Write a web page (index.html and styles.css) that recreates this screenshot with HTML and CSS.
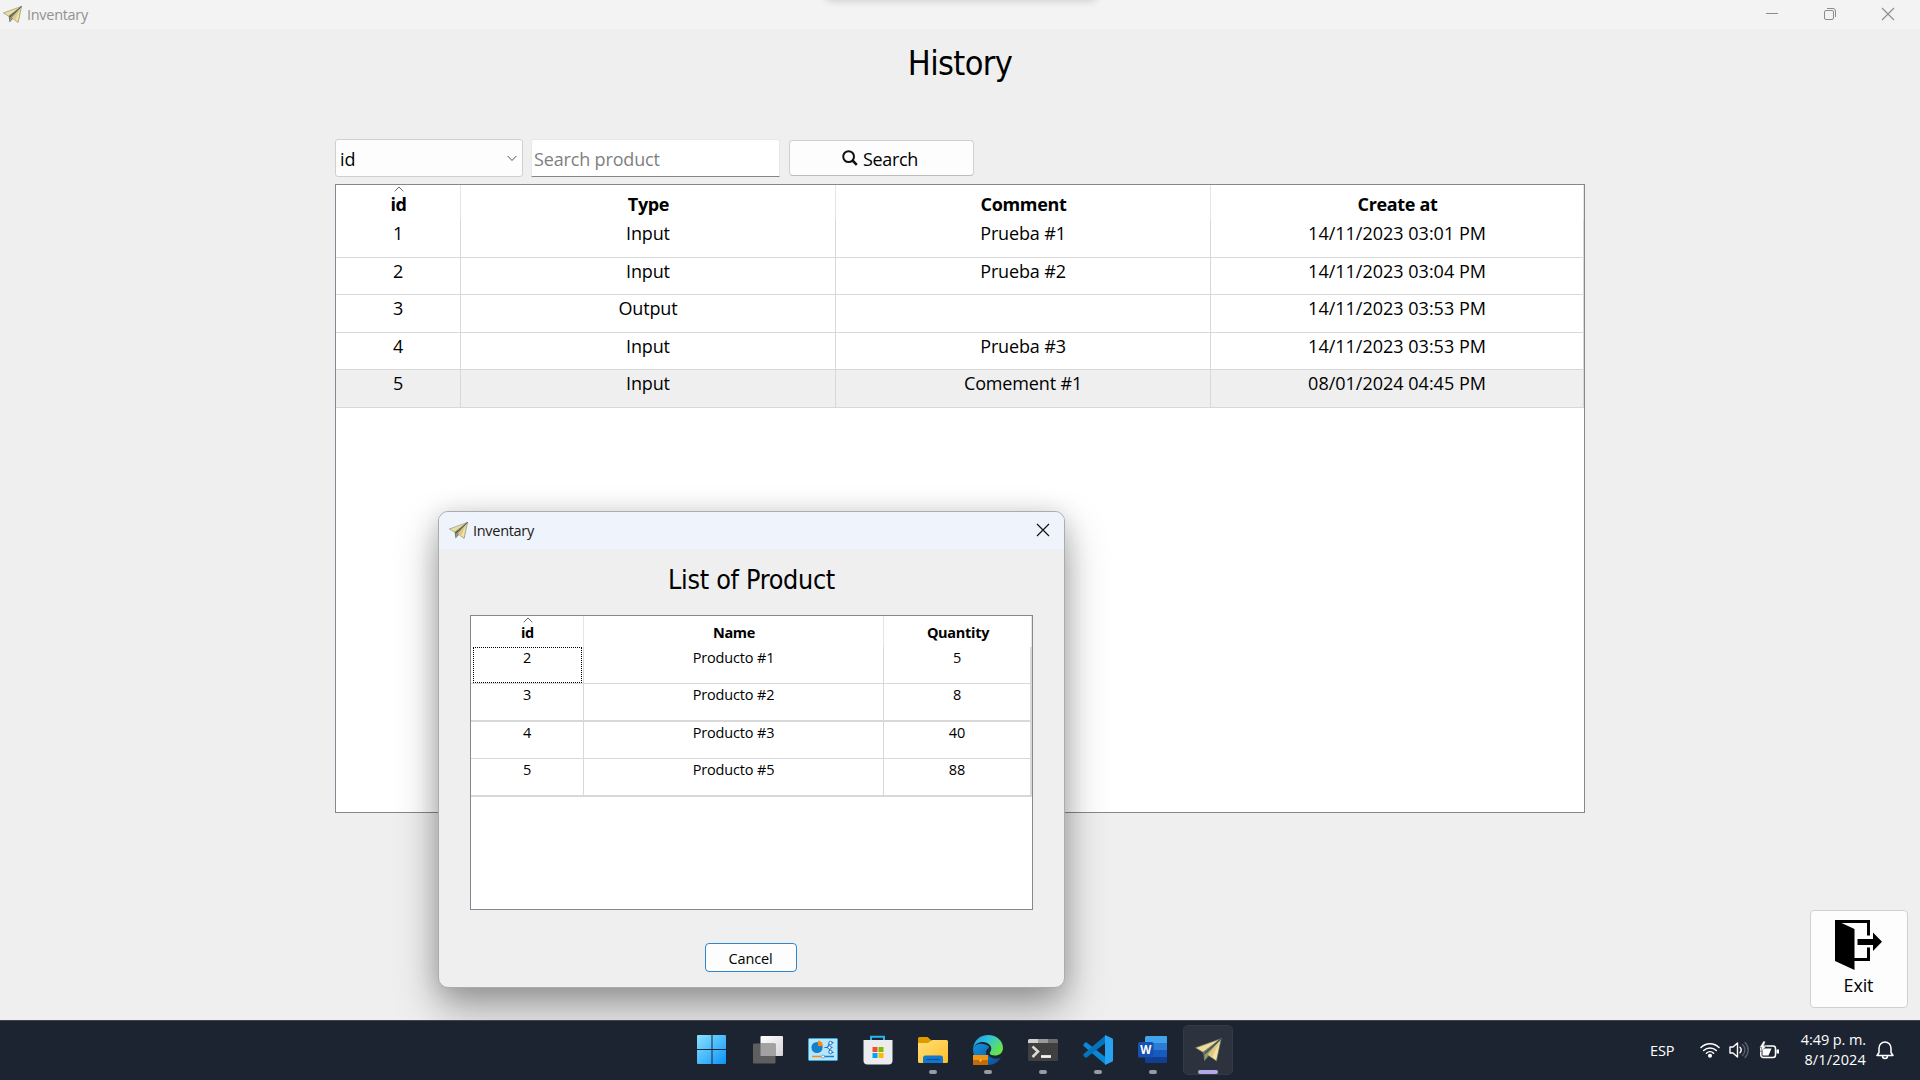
FILE: index.html
```html
<!DOCTYPE html>
<html lang="es">
<head>
<meta charset="utf-8">
<title>Inventary</title>
<link rel="stylesheet" href="styles.css">
</head>
<body>
<svg class="defs" width="0" height="0" aria-hidden="true">
  <symbol id="plane" viewBox="0 0 27 24">
    <path d="M26.300.500 8 14l1.300 9.200L14 18z" fill="#66786e"/>
    <path d="M26.300.500.500 9.800 8 14.300z" fill="#f0dc98" stroke="#66776c" stroke-width=".7"/>
    <path d="M22 5 10.500 15.500l-1.200 7 3.700-5.500z" fill="#a59c70"/>
    <path d="M26.300.500 12.500 16.500 21.500 23.200z" fill="#f5e3a3" stroke="#4c6058" stroke-width=".7"/>
    <path d="M26.300.500 12.500 16.500l4.500 3.300z" fill="#e0c987"/>
    <path d="M26.300.500 10 15.500" stroke="#3f5650" stroke-width="1.300"/>
  </symbol>
</svg>

<div class="desktop">
  <div class="flyout"></div>
  <header class="titlebar">
    <svg class="title-icon" viewBox="0 0 27 24"><use href="#plane"/></svg>
    <span class="caption caption-muted">Inventary</span>
    <div class="window-controls">
      <svg width="14" height="14" viewBox="0 0 14 14"><path d="M1 6.500h12" stroke="#8c8c8c"/></svg>
      <svg width="14" height="14" viewBox="0 0 14 14" fill="none" stroke="#8c8c8c"><rect x="1.500" y="3.500" width="9" height="9" rx="1.500"/><path d="M4 1.500h6a2.500 2.500 0 0 1 2.500 2.500v6"/></svg>
      <svg width="14" height="14" viewBox="0 0 14 14"><path d="M1 1l12 12M13 1 1 13" stroke="#8c8c8c" stroke-width="1.100"/></svg>
    </div>
  </header>

  <main class="page">
    <h1 class="page-title">History</h1>
    <div class="toolbar">
      <div class="combo"><span>id</span>
        <svg width="10" height="7" viewBox="0 0 10 7"><path d="M.7 1 5 5.500 9.300 1" fill="none" stroke="#555"/></svg>
      </div>
      <div class="field">Search product</div>
      <button class="search-btn">
        <svg width="16" height="16" viewBox="0 0 16 16"><circle cx="6.600" cy="6.600" r="5.400" fill="none" stroke="#111" stroke-width="2"/><path d="m10.500 10.500 4.300 4.300" stroke="#111" stroke-width="2.600"/></svg>
        <span>Search</span>
      </button>
    </div>

    <div class="table history">
      <div class="row head">
        <div class="cell"><svg class="sort" viewBox="0 0 10 6"><path d="M.7 5.300 5 1l4.300 4.300" fill="none" stroke="#666"/></svg>id</div>
        <div class="cell">Type</div><div class="cell">Comment</div><div class="cell">Create at</div>
      </div>
      <div class="row"><div class="cell">1</div><div class="cell">Input</div><div class="cell">Prueba #1</div><div class="cell date">14/11/2023 03:01 PM</div></div>
      <div class="row"><div class="cell">2</div><div class="cell">Input</div><div class="cell">Prueba #2</div><div class="cell date">14/11/2023 03:04 PM</div></div>
      <div class="row"><div class="cell">3</div><div class="cell">Output</div><div class="cell"></div><div class="cell date">14/11/2023 03:53 PM</div></div>
      <div class="row"><div class="cell">4</div><div class="cell">Input</div><div class="cell">Prueba #3</div><div class="cell date">14/11/2023 03:53 PM</div></div>
      <div class="row selected"><div class="cell">5</div><div class="cell">Input</div><div class="cell">Comement #1</div><div class="cell date">08/01/2024 04:45 PM</div></div>
    </div>

    <button class="exit-btn">
      <svg width="47" height="50" viewBox="0 0 47 50">
        <path d="M0 0h35v15.500h-3V3H6.500L19.500 9v29H32V27.500h3V41H19.500v9L0 41z" fill="#000"/>
        <path d="M22.500 19h15.500v-6.500l9 9.300-9 9.200V25H22.500z" fill="#000"/>
      </svg>
      <span>Exit</span>
    </button>
  </main>

  <section class="dialog">
    <header class="dialog-bar">
      <svg class="title-icon" viewBox="0 0 27 24"><use href="#plane"/></svg>
      <span class="caption">Inventary</span>
      <svg class="dialog-close" width="14" height="14" viewBox="0 0 14 14"><path d="M1 1l12 12M13 1 1 13" stroke="#111" stroke-width="1.200"/></svg>
    </header>
    <h2 class="dialog-title">List of Product</h2>
    <div class="table products">
      <div class="row head">
        <div class="cell"><svg class="sort" viewBox="0 0 10 6"><path d="M.7 5.300 5 1l4.300 4.300" fill="none" stroke="#666"/></svg>id</div>
        <div class="cell">Name</div><div class="cell">Quantity</div>
      </div>
      <div class="row"><div class="cell focused">2</div><div class="cell">Producto #1</div><div class="cell">5</div></div>
      <div class="row"><div class="cell">3</div><div class="cell">Producto #2</div><div class="cell">8</div></div>
      <div class="row"><div class="cell">4</div><div class="cell">Producto #3</div><div class="cell">40</div></div>
      <div class="row"><div class="cell">5</div><div class="cell">Producto #5</div><div class="cell">88</div></div>
    </div>
    <button class="cancel-btn">Cancel</button>
  </section>

  <footer class="taskbar">
    <nav class="apps">
      <div class="app start"><svg width="30" height="30" viewBox="0 0 30 30">
        <defs><linearGradient id="win" x2="1" y2="1"><stop stop-color="#8ae2ff"/><stop offset="1" stop-color="#0a94f8"/></linearGradient></defs>
        <path d="M1 0h13.500v14H0V1a1 1 0 0 1 1-1zM15.500 0H28a1 1 0 0 1 1 1v13H15.500zM0 15h14.500v14H1a1 1 0 0 1-1-1zM15.500 15H29v13a1 1 0 0 1-1 1H15.500z" fill="url(#win)"/></svg></div>
      <div class="app"><svg width="30" height="30" viewBox="0 0 30 30">
        <defs><linearGradient id="tv" x2="1" y2="1"><stop stop-color="#fff"/><stop offset="1" stop-color="#d4d4d4"/></linearGradient></defs>
        <rect x="7.500" y="1" width="22.500" height="20" rx="1" fill="url(#tv)"/><rect y="8.500" width="22.500" height="20" rx="1" fill="#5e5e5e"/><path d="M7.500 8.500h15V21h-15z" fill="#a2a2a2"/></svg></div>
      <div class="app"><svg width="30" height="30" viewBox="0 0 30 30">
        <rect x=".5" y="3.500" width="29" height="22" rx="1" fill="#b5e6fb" stroke="#35a5dc"/>
        <circle cx="9" cy="12.500" r="5.600" fill="#167fc9"/><path d="M10 11V5.500a5.500 5.500 0 0 1 5 5.500z" fill="#f88a10"/>
        <path d="M16.500 12.500h3l2-5h4M19.500 12.500h5M21.500 12.500v5h4" fill="none" stroke="#176eb4"/>
        <circle cx="22.500" cy="8" r="1.700" fill="#fff" stroke="#176eb4"/><circle cx="21.500" cy="12.500" r="1.700" fill="#fff" stroke="#176eb4"/><circle cx="22.500" cy="17" r="1.700" fill="#fff" stroke="#176eb4"/>
        <path d="M4 21.500h11" stroke="#f88a10" stroke-width="1.500"/><path d="M15 21.500h11" stroke="#167fc9" stroke-width="1.500"/><circle cx="15" cy="21.500" r="1.500" fill="#fff" stroke="#2688c8" stroke-width=".6"/></svg></div>
      <div class="app"><svg width="30" height="30" viewBox="0 0 30 30">
        <path d="M8 6V1.700h13V6" fill="none" stroke="#27b4f2" stroke-width="2"/>
        <path d="M.5 5h29v20.500a4 4 0 0 1-4 4h-21a4 4 0 0 1-4-4z" fill="#ececee"/>
        <path d="M9.500 12h5v5h-5z" fill="#f25022"/><path d="M15.500 12h5v5h-5z" fill="#7fba00"/><path d="M9.500 18h5v5h-5z" fill="#00a4ef"/><path d="M15.500 18h5v5h-5z" fill="#ffb900"/></svg></div>
      <div class="app running"><svg width="30" height="30" viewBox="0 0 30 30">
        <defs><linearGradient id="fold" x2="1" y2="1"><stop stop-color="#ffe078"/><stop offset="1" stop-color="#fcbd29"/></linearGradient></defs>
        <path d="M0 3.500a1.500 1.500 0 0 1 1.500-1.500h8L13 5v6H0z" fill="#dd9b00"/>
        <path d="M0 8h10l4-3h14.500A1.500 1.500 0 0 1 30 6.500v20a1.500 1.500 0 0 1-1.500 1.500h-27A1.500 1.500 0 0 1 0 26.500z" fill="url(#fold)"/>
        <path d="M5 28v-5a2.500 2.500 0 0 1 2.500-2.500h15A2.500 2.500 0 0 1 25 23v5z" fill="#1177cf"/><path d="M8.500 24.500h13" stroke="#08508f" stroke-width="1.200"/></svg></div>
      <div class="app running"><svg width="30" height="30" viewBox="0 0 30 30">
        <defs><linearGradient id="edgeA" x2="1" y2=".6"><stop stop-color="#1690df"/><stop offset=".45" stop-color="#30c1dd"/><stop offset="1" stop-color="#68e645"/></linearGradient>
        <linearGradient id="edgeB" x2="1" y2="1"><stop stop-color="#1493df"/><stop offset="1" stop-color="#0b4a91"/></linearGradient></defs>
        <path d="M0 14c0 9 6 16 15 16 6 0 10.500-3 13-7.500-5 2.500-12 1-13-4-1-4 1-5 1-7C10 7 2 8 0 14z" fill="url(#edgeB)"/>
        <path d="M0 14C1 5 7 0 15 0c9 0 15 6 15 13 0 5-4 7.500-8 7.500-3.500 0-5.500-1.200-5.500-2.500s1.800-1.500 1.800-4.500C18.300 10 14.500 7 10 7 5 7 1.500 9.500 0 14z" fill="url(#edgeA)"/>
        <path d="M15 13.500c-2 1.500-2.500 4-1.500 6.500h3.500c-1.200-1.500-.3-2.500.5-3.500z" fill="#1b2636"/>
        <rect y="20" width="15" height="10" fill="#c26c08"/><path d="M0 20h15v5H0z" fill="#ef9614"/><circle cx="7.500" cy="25.500" r="1" fill="#ffe35c"/></svg></div>
      <div class="app running"><svg width="30" height="30" viewBox="0 0 30 30">
        <rect y="4" width="30" height="22" rx="1.500" fill="#404040"/><path d="M1.500 4H10v4H0V5.500A1.500 1.500 0 0 1 1.500 4z" fill="#d0d0d0"/><path d="M10 4h10v4H10z" fill="#999"/><path d="M20 4h8.500A1.500 1.500 0 0 1 30 5.500V8H20z" fill="#6d6d6d"/>
        <path d="m4.500 11.500 5.500 5-5.500 5.500" fill="none" stroke="#d8d8d8" stroke-width="2.600"/><path d="M13 21.500h10" stroke="#f2f2f2" stroke-width="2.800"/></svg></div>
      <div class="app running"><svg width="30" height="30" viewBox="0 0 30 30">
        <path d="M.5 9 3 7l20 15.500V30L.5 11z" fill="#0a87d6"/><path d="M.5 21 3 23 23 7.500V0L.5 19z" fill="#0674bd"/>
        <path d="M22 0l7 3.200a1.500 1.500 0 0 1 1 1.400v20.800a1.500 1.500 0 0 1-1 1.400L22 30z" fill="#26a3f2"/></svg></div>
      <div class="app running"><svg width="30" height="30" viewBox="0 0 30 30">
        <path d="M8.500 1H28a1 1 0 0 1 1 1v6H7V2.500A1.500 1.500 0 0 1 8.500 1z" fill="#41a5ee"/><path d="M7 8h22v7H7z" fill="#2b7cd3"/><path d="M7 15h22v7H7z" fill="#185abd"/><path d="M7 22h22v5a1 1 0 0 1-1 1H8.500A1.500 1.500 0 0 1 7 26.500z" fill="#103f91"/>
        <rect y="7" width="15.500" height="15.500" rx="1.500" fill="#1550b2"/><text class="word-letter" x="7.700" y="18.700" text-anchor="middle">W</text></svg></div>
      <div class="app running active"><svg width="27" height="24" viewBox="0 0 27 24"><use href="#plane"/></svg></div>
    </nav>
    <div class="tray">
      <span class="lang">ESP</span>
      <svg class="wifi" width="20" height="16" viewBox="0 0 20 16" fill="none" stroke="#fff" stroke-width="1.500" stroke-linecap="round"><path d="M1 5.500a12.700 12.700 0 0 1 18 0M3.700 8.500a9 9 0 0 1 12.600 0M6.400 11.300a5.200 5.200 0 0 1 7.200 0"/><circle cx="10" cy="13.800" r="1.300" fill="#fff"/></svg>
      <svg class="sound" width="21" height="18" viewBox="0 0 21 18" fill="none" stroke="#fff" stroke-width="1.400" stroke-linecap="round" stroke-linejoin="round"><path d="M1 6h3l4.500-4v14L4 12H1zM11 6.300a4 4 0 0 1 0 5.400"/><path d="M13.500 3.500a7.500 7.500 0 0 1 0 11M16 1.500a10.500 10.500 0 0 1 0 15" stroke="#59606c"/></svg>
      <svg class="battery" width="21" height="19" viewBox="0 0 21 19"><rect x="1.800" y="5" width="14.700" height="11.500" rx="2.500" fill="none" stroke="#fff" stroke-width="1.500"/><path d="M3.500 7.500h9L9.500 14.500h-6zM17.500 8.500H20v4h-2.500z" fill="#fff"/><path d="M4.500 0 .5 6.500h2.300L1.500 11 7.500 5H4.800L6.500.500z" fill="#fff" stroke="#1d2431" stroke-width=".4"/></svg>
      <div class="clock"><span>4:49 p. m.</span><span>8/1/2024</span></div>
      <svg class="bell" width="18" height="20" viewBox="0 0 18 20" fill="none" stroke="#fff" stroke-width="1.500" stroke-linejoin="round"><path d="M3 8a6 6 0 0 1 12 0v4.500l2 3H1l2-3zM6.500 16a2.500 2.500 0 0 0 5 0"/></svg>
    </div>
  </footer>
</div>
</body>
</html>
```
FILE: styles.css
```css
* { box-sizing: border-box; }
body {
  margin: 0;
  font-family: "Open Sans", "Noto Sans", sans-serif;
  font-size: 18px;
  letter-spacing: -0.15px;
  color: #000;
}
button { font: inherit; letter-spacing: inherit; color: inherit; padding: 0; }
.defs { position: absolute; }
.desktop {
  position: relative;
  width: 1920px;
  height: 1080px;
  overflow: hidden;
  display: flex;
  flex-direction: column;
  background: #efefef;
}
.flyout {
  position: absolute;
  left: 824px;
  top: -20px;
  width: 274px;
  height: 20px;
  border-radius: 8px;
  box-shadow: 0 0 9px rgba(0, 0, 0, .2);
}

/* Main window */
.titlebar {
  flex: none;
  height: 29px;
  display: flex;
  align-items: center;
  padding: 0 25px 1px 3px;
  background: #f3f3f3;
}
.title-icon { width: 19px; height: 17px; flex: none; }
.caption { margin-left: 5px; font-size: 14.5px; line-height: 20px; letter-spacing: -.3px; color: #1a1a1a; }
.caption-muted { color: #929292; padding-top: 2px; }
.window-controls { display: flex; gap: 44px; margin-left: auto; }
.page { flex: 1; display: flex; flex-direction: column; padding-right: 12px; }
.page-title, .dialog-title {
  margin: 0;
  text-align: center;
  font-family: "DejaVu Sans Condensed", "DejaVu Sans", sans-serif;
  font-stretch: condensed;
  font-weight: 400;
}
.page-title { margin-right: -12px; height: 66px; padding-top: 1px; line-height: 66px; font-size: 34px; letter-spacing: -.65px; }
.toolbar { display: flex; align-items: center; margin: 44px 0 0 335px; height: 38px; }
.combo {
  width: 188px;
  height: 38px;
  padding: 0 5px 0 4px;
  display: flex;
  align-items: center;
  justify-content: space-between;
  border: 1px solid #d0d0d0;
  border-radius: 3px;
  background: #fdfdfd;
  line-height: 36px;
}
.combo span { padding-top: 2px; }
.field {
  width: 249px;
  height: 38px;
  margin-left: 8px;
  padding: 1px 0 0 2px;
  line-height: 36px;
  border: 1px solid #e8e8e8;
  border-bottom-color: #868686;
  border-radius: 3px 3px 1px 1px;
  background: #fff;
  color: #7f7f7f;
}
.search-btn {
  width: 185px;
  height: 36px;
  margin-left: 9px;
  display: flex;
  align-items: center;
  justify-content: center;
  gap: 5px;
  padding-right: 3px;
  border: 1px solid #d0d0d0;
  border-bottom-color: #bcbcbc;
  border-radius: 4px;
  background: #fdfdfd;
}
.search-btn span { padding-top: 1px; line-height: 30px; letter-spacing: -.3px; }

/* Tables */
.table { background: #fff; border: 1px solid #828790; flex: none; }
.row { display: grid; text-align: center; }
.cell { position: relative; border-right: 1px solid #d8d8d8; border-bottom: 1px solid #d8d8d8; }
.head .cell { font-weight: 700; border-right-color: #e5e5e5; border-bottom: 0; }
.date { letter-spacing: 0; }
.sort { position: absolute; left: 50%; top: 1px; width: 10px; height: 6px; margin-left: -4px; }
.history { width: 1250px; height: 629px; margin: 7px 0 0 335px; }
.history .row { grid-template-columns: 125px 375px 375px 373px; height: 37px; line-height: 26px; }
.history .row:nth-child(even), .history .selected { height: 38px; }
.history .head { height: 35px; line-height: 26px; }
.history .head .cell { padding: 6px 0 0 1px; letter-spacing: -.35px; }
.selected { background: #efefef; }

.exit-btn {
  width: 98px;
  height: 98px;
  margin: auto 0 12px auto;
  display: flex;
  flex-direction: column;
  align-items: center;
  padding: 9px 1px 0 0;
  border: 1px solid #d0d0d0;
  border-radius: 4px;
  background: #fdfdfd;
}
.exit-btn span { margin-top: 2px; line-height: 26px; }

/* Product dialog */
.dialog {
  position: absolute;
  left: 438px;
  top: 511px;
  width: 627px;
  height: 477px;
  display: flex;
  flex-direction: column;
  align-items: center;
  border: 1px solid #a9abaf;
  border-radius: 10px;
  background: #efefef;
  font-size: 14.5px;
  box-shadow: 0 20px 42px rgba(0, 0, 0, .34), 0 2px 24px rgba(0, 0, 0, .14);
}
.dialog-bar {
  flex: none;
  width: 100%;
  height: 37px;
  padding: 0 14px 1px 10px;
  display: flex;
  align-items: center;
  border-radius: 9px 9px 0 0;
  background: #eff3fb;
}
.dialog-bar .caption { padding-top: 1px; }
.dialog-close { margin-left: auto; }
.dialog-title { height: 61px; line-height: 61px; font-size: 26.700px; letter-spacing: -.3px; }
.products { width: 563px; height: 295px; margin-top: 5px; margin-right: 1px; }
.products .row { grid-template-columns: 113px 300px 148px; height: 37px; line-height: 22px; }
.products .row:nth-child(odd) { height: 38px; }
.products .row:nth-child(odd) .cell { border-bottom-width: 2px; }
.products .cell { padding-left: 1px; }
.products .cell:last-child { border-right-width: 2px; }
.products .row.head { height: 31px; }
.products .row.head .cell { padding: 6px 0 0 2px; border-bottom: 0; letter-spacing: -.3px; }
.products .head .cell:last-child { border-right-width: 1px; }
.focused::after { content: ""; position: absolute; inset: 0 1px 0 2px; border: 1px dotted #000; }
.cancel-btn {
  width: 92px;
  height: 29px;
  margin: 33px 2px 0 0;
  padding-top: 1px;
  line-height: 27px;
  border: 1px solid #2f86cf;
  border-radius: 4px;
  background: #fdfdfd;
}

/* Taskbar */
.taskbar {
  position: relative;
  flex: none;
  height: 60px;
  display: flex;
  align-items: center;
  justify-content: space-between;
  padding: 0 26px 1px 688px;
  border-top: 1px solid #41454c;
  background: #1d2431;
  color: #fff;
}
.apps { display: flex; gap: 5px; }
.app {
  position: relative;
  width: 50px;
  height: 50px;
  display: flex;
  align-items: center;
  justify-content: center;
  border-radius: 5px;
}
.start { padding-right: 2px; }
.running::after {
  content: "";
  position: absolute;
  left: 21px;
  bottom: 1px;
  width: 8px;
  height: 4px;
  border-radius: 2px;
  background: #989ba2;
}
.active { background: #2c323e; border: 1px solid #353b46; }
.active::after { left: 14px; bottom: 0; width: 20px; background: #b4a8e8; }
.word-letter { font: 700 11.500px "Open Sans", sans-serif; fill: #fff; }
.tray { display: flex; align-items: center; font-size: 14.5px; letter-spacing: -.1px; }
.lang { width: 50px; }
.sound { margin-left: 9px; }
.battery { margin-left: 9px; }
.clock { width: 86px; display: flex; flex-direction: column; text-align: right; line-height: 20px; }
.clock span:last-child { letter-spacing: .15px; }
.bell { margin-left: 10px; }
```
